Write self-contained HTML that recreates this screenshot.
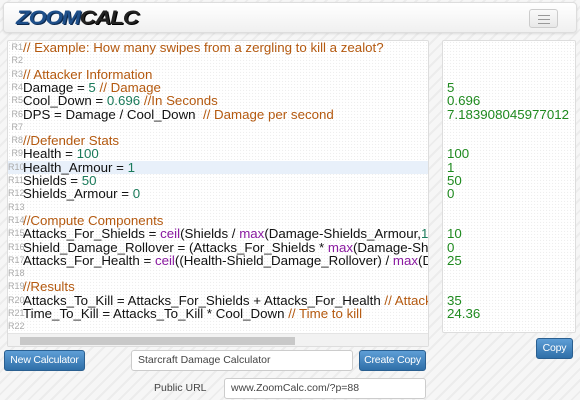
<!DOCTYPE html>
<html><head><meta charset="utf-8"><style>
*{box-sizing:border-box;margin:0;padding:0}
body{width:580px;height:400px;overflow:hidden;font-family:"Liberation Sans",Arial,sans-serif;
background:repeating-linear-gradient(135deg,#f6f6f6 0 6px,#ececec 6px 8px);position:relative}
.hdr{position:absolute;left:3px;top:2px;width:574px;height:31px;background:linear-gradient(#fff,#f0f0f0);border:1px solid #ddd;border-radius:4px;box-shadow:0 1px 2px rgba(0,0,0,.1)}
.logo{position:absolute;left:12px;top:5px;font:italic 900 19px "Liberation Sans",sans-serif;letter-spacing:-1px;color:#1e4f8a;text-shadow:1px 1px 0 #0c2a50;transform:scaleX(1.2);transform-origin:left}
.logo span{color:#222;text-shadow:1px 1px 0 #000}
.tog{position:absolute;left:525px;top:6px;width:29px;height:19px;border:1px solid #ccc;border-radius:3px;background:linear-gradient(#fafafa,#e8e8e8)}
.tog i{position:absolute;left:8px;width:12px;height:1px;background:#999}
.panel{position:absolute;background:#fff;border:1px solid #ddd;border-radius:2px;
background-image:radial-gradient(#eee 0.6px,transparent 0.8px);background-size:3px 3px}
.ed{left:7px;top:40px;width:422px;height:307px;overflow:hidden}
.res{left:442px;top:40px;width:134px;height:293px}
.line{position:absolute;left:0;height:13.3px;line-height:13.3px;font-size:13.3px;white-space:nowrap;color:#111}
.ln{display:inline-block;width:15px;text-align:right;font-size:9px;color:#aaa;vertical-align:top}
.c{color:#b4590f}.n{color:#1a7a5a}.f{color:#8a1aa0}
.hl{background:#e8f0fa}
.r{position:absolute;left:4px;font-size:13.3px;line-height:13.3px;color:#1f8a1f}
.sb{position:absolute;left:0;top:292px;width:420px;height:14px;background:#f2f2f2;border-top:1px solid #e4e4e4}
.sb b{position:absolute;left:12px;top:3px;width:275px;height:8px;background:#c8c8c8}
.btn{position:absolute;height:21px;border-radius:3px;background:linear-gradient(#5e9ed6,#2f6fa8);border:1px solid #2a5f90;color:#fff;font-size:10.5px;line-height:19px;text-align:center;letter-spacing:-0.2px}
.inp{position:absolute;height:21px;border:1px solid #ccc;border-radius:3px;background:#fff;font-size:10.5px;line-height:19px;padding-left:6px;color:#444}
</style></head><body>
<div class="hdr"><div class="logo">ZOOM<span>CALC</span></div>
<div class="tog"><i style="top:5px"></i><i style="top:9px"></i><i style="top:13px"></i></div></div>

<div class="panel ed">
<div class="line" style="top:0px"><span class="ln">R1</span><span class="c">// Example: How many swipes from a zergling to kill a zealot?</span></div>
<div class="line" style="top:13.3px"><span class="ln">R2</span></div>
<div class="line" style="top:26.6px"><span class="ln">R3</span><span class="c">// Attacker Information</span></div>
<div class="line" style="top:39.9px"><span class="ln">R4</span>Damage = <span class="n">5</span> <span class="c">// Damage</span></div>
<div class="line" style="top:53.2px"><span class="ln">R5</span>Cool_Down = <span class="n">0.696</span> <span class="c">//In Seconds</span></div>
<div class="line" style="top:66.5px"><span class="ln">R6</span>DPS = Damage / Cool_Down &nbsp;<span class="c">// Damage per second</span></div>
<div class="line" style="top:79.8px"><span class="ln">R7</span></div>
<div class="line" style="top:93.1px"><span class="ln">R8</span><span class="c">//Defender Stats</span></div>
<div class="line" style="top:106.4px"><span class="ln">R9</span>Health = <span class="n">100</span></div>
<div class="line hl" style="top:119.7px;width:420px"><span class="ln">R10</span>Health_Armour = <span class="n">1</span></div>
<div class="line" style="top:133px"><span class="ln">R11</span>Shields = <span class="n">50</span></div>
<div class="line" style="top:146.3px"><span class="ln">R12</span>Shields_Armour = <span class="n">0</span></div>
<div class="line" style="top:159.6px"><span class="ln">R13</span></div>
<div class="line" style="top:172.9px"><span class="ln">R14</span><span class="c">//Compute Components</span></div>
<div class="line" style="top:186.2px"><span class="ln">R15</span>Attacks_For_Shields = <span class="f">ceil</span>(Shields / <span class="f">max</span>(Damage-Shields_Armour,<span class="n">1</span>))</div>
<div class="line" style="top:199.5px"><span class="ln">R16</span>Shield_Damage_Rollover = (Attacks_For_Shields * <span class="f">max</span>(Damage-Shields_Armour,1))</div>
<div class="line" style="top:212.8px"><span class="ln">R17</span>Attacks_For_Health = <span class="f">ceil</span>((Health-Shield_Damage_Rollover) / <span class="f">max</span>(Damage))</div>
<div class="line" style="top:226.1px"><span class="ln">R18</span></div>
<div class="line" style="top:239.4px"><span class="ln">R19</span><span class="c">//Results</span></div>
<div class="line" style="top:252.7px"><span class="ln">R20</span>Attacks_To_Kill = Attacks_For_Shields + Attacks_For_Health <span class="c">// Attacks</span></div>
<div class="line" style="top:266px"><span class="ln">R21</span>Time_To_Kill = Attacks_To_Kill * Cool_Down <span class="c">// Time to kill</span></div>
<div class="line" style="top:279.3px"><span class="ln">R22</span></div>
<div class="sb"><b></b></div>
</div>

<div class="panel res">
<div class="r" style="top:39.9px">5</div>
<div class="r" style="top:53.2px">0.696</div>
<div class="r" style="top:66.5px">7.183908045977012</div>
<div class="r" style="top:106.4px">100</div>
<div class="r" style="top:119.7px">1</div>
<div class="r" style="top:133px">50</div>
<div class="r" style="top:146.3px">0</div>
<div class="r" style="top:186.2px">10</div>
<div class="r" style="top:199.5px">0</div>
<div class="r" style="top:212.8px">25</div>
<div class="r" style="top:252.7px">35</div>
<div class="r" style="top:266px">24.36</div>
</div>

<div class="btn" style="left:536px;top:338px;width:37px">Copy</div>
<div class="btn" style="left:4px;top:350px;width:81px">New Calculator</div>
<div class="inp" style="left:131px;top:350px;width:222px">Starcraft Damage Calculator</div>
<div class="btn" style="left:359px;top:350px;width:67px">Create Copy</div>
<div style="position:absolute;left:154px;top:382px;font-size:10.5px;color:#444">Public URL</div>
<div class="inp" style="left:224px;top:378px;width:202px">www.ZoomCalc.com/?p=88</div>
</body></html>
